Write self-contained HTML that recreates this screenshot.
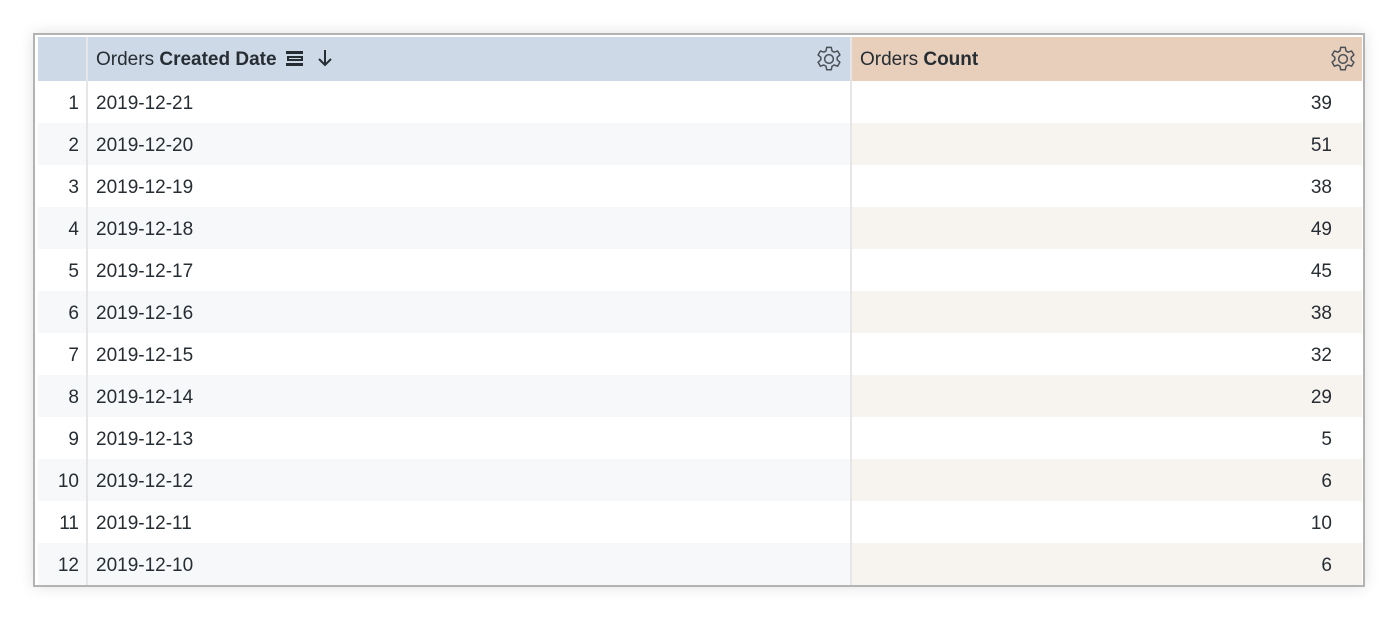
<!DOCTYPE html>
<html><head><style>
body{margin:0;width:1398px;height:620px;background:#fff;font-family:"Liberation Sans",sans-serif;color:#262d33;position:relative;overflow:hidden}
.frame{position:absolute;left:33px;top:33px;width:1328px;height:550px;border:2px solid #b3b3b3;box-shadow:0 0 14px rgba(0,0,0,.12);background:#fff}
table{position:absolute;left:3px;top:2px;border-collapse:collapse;table-layout:fixed;width:1324px}
td,th{padding:3px 0 0 0;height:42px;font-size:19px;white-space:nowrap;box-sizing:border-box}
th{height:44px;font-weight:normal;text-align:left;padding-top:2px}
.n{width:49px;text-align:right;padding-right:7px;border-right:2px solid #e6e6e6}
.d{width:764px;padding-left:8px;border-right:2px solid #e6e6e6}
.c{width:511px;text-align:right;padding-right:30px}
th.n,th.d{background:#cdd9e6}
th.c{background:#e8cfbc;text-align:left;padding-left:8px}
tr:nth-child(odd) td.n,tr:nth-child(odd) td.d{background:#f7f8fa}
tr:nth-child(odd) td.c{background:#f7f3ef}
th{position:relative}
b{font-weight:bold}
.g{position:absolute;top:7px}
</style></head><body>
<div class="frame"><table>
<tr><th class="n"></th><th class="d">Orders <b>Created Date</b>
<svg width="22" height="18" viewBox="0 0 22 18" style="vertical-align:-2px;margin-left:2px"><rect x="2" y="2" width="17" height="3" fill="#262d33"/><rect x="4" y="8" width="14" height="3" fill="none" stroke="#262d33" stroke-width="2"/><rect x="2" y="14" width="17" height="3" fill="#262d33"/></svg>
<svg width="16" height="18" viewBox="0 0 16 18" style="vertical-align:-2px;margin-left:6px"><path d="M8 1v15M2 10l6 6 6-6" fill="none" stroke="#262d33" stroke-width="2"/></svg>
<svg class="g" style="right:6px" width="30" height="30" viewBox="1 1 22 22"><path d="M10.3 2h3.4l.5 2.6 1.6.9 2.5-.9 1.7 2.9-2 1.8v1.8l2 1.8-1.7 2.9-2.5-.9-1.6.9-.5 2.6h-3.4l-.5-2.6-1.6-.9-2.5.9-1.7-2.9 2-1.8V9.3l-2-1.8 1.7-2.9 2.5.9 1.6-.9z" fill="none" stroke="#4a5158" stroke-width="1.1" stroke-linejoin="round" transform="translate(0 1.5)"/><circle cx="12" cy="12" r="3.2" fill="none" stroke="#4a5158" stroke-width="1.1"/></svg></th>
<th class="c">Orders <b>Count</b>
<svg class="g" style="right:4px" width="30" height="30" viewBox="1 1 22 22"><path d="M10.3 2h3.4l.5 2.6 1.6.9 2.5-.9 1.7 2.9-2 1.8v1.8l2 1.8-1.7 2.9-2.5-.9-1.6.9-.5 2.6h-3.4l-.5-2.6-1.6-.9-2.5.9-1.7-2.9 2-1.8V9.3l-2-1.8 1.7-2.9 2.5.9 1.6-.9z" fill="none" stroke="#4a5158" stroke-width="1.1" stroke-linejoin="round" transform="translate(0 1.5)"/><circle cx="12" cy="12" r="3.2" fill="none" stroke="#4a5158" stroke-width="1.1"/></svg></th></tr>
<tr><td class="n">1</td><td class="d">2019-12-21</td><td class="c">39</td></tr>
<tr><td class="n">2</td><td class="d">2019-12-20</td><td class="c">51</td></tr>
<tr><td class="n">3</td><td class="d">2019-12-19</td><td class="c">38</td></tr>
<tr><td class="n">4</td><td class="d">2019-12-18</td><td class="c">49</td></tr>
<tr><td class="n">5</td><td class="d">2019-12-17</td><td class="c">45</td></tr>
<tr><td class="n">6</td><td class="d">2019-12-16</td><td class="c">38</td></tr>
<tr><td class="n">7</td><td class="d">2019-12-15</td><td class="c">32</td></tr>
<tr><td class="n">8</td><td class="d">2019-12-14</td><td class="c">29</td></tr>
<tr><td class="n">9</td><td class="d">2019-12-13</td><td class="c">5</td></tr>
<tr><td class="n">10</td><td class="d">2019-12-12</td><td class="c">6</td></tr>
<tr><td class="n">11</td><td class="d">2019-12-11</td><td class="c">10</td></tr>
<tr><td class="n">12</td><td class="d">2019-12-10</td><td class="c">6</td></tr>
</table></div>
</body></html>
